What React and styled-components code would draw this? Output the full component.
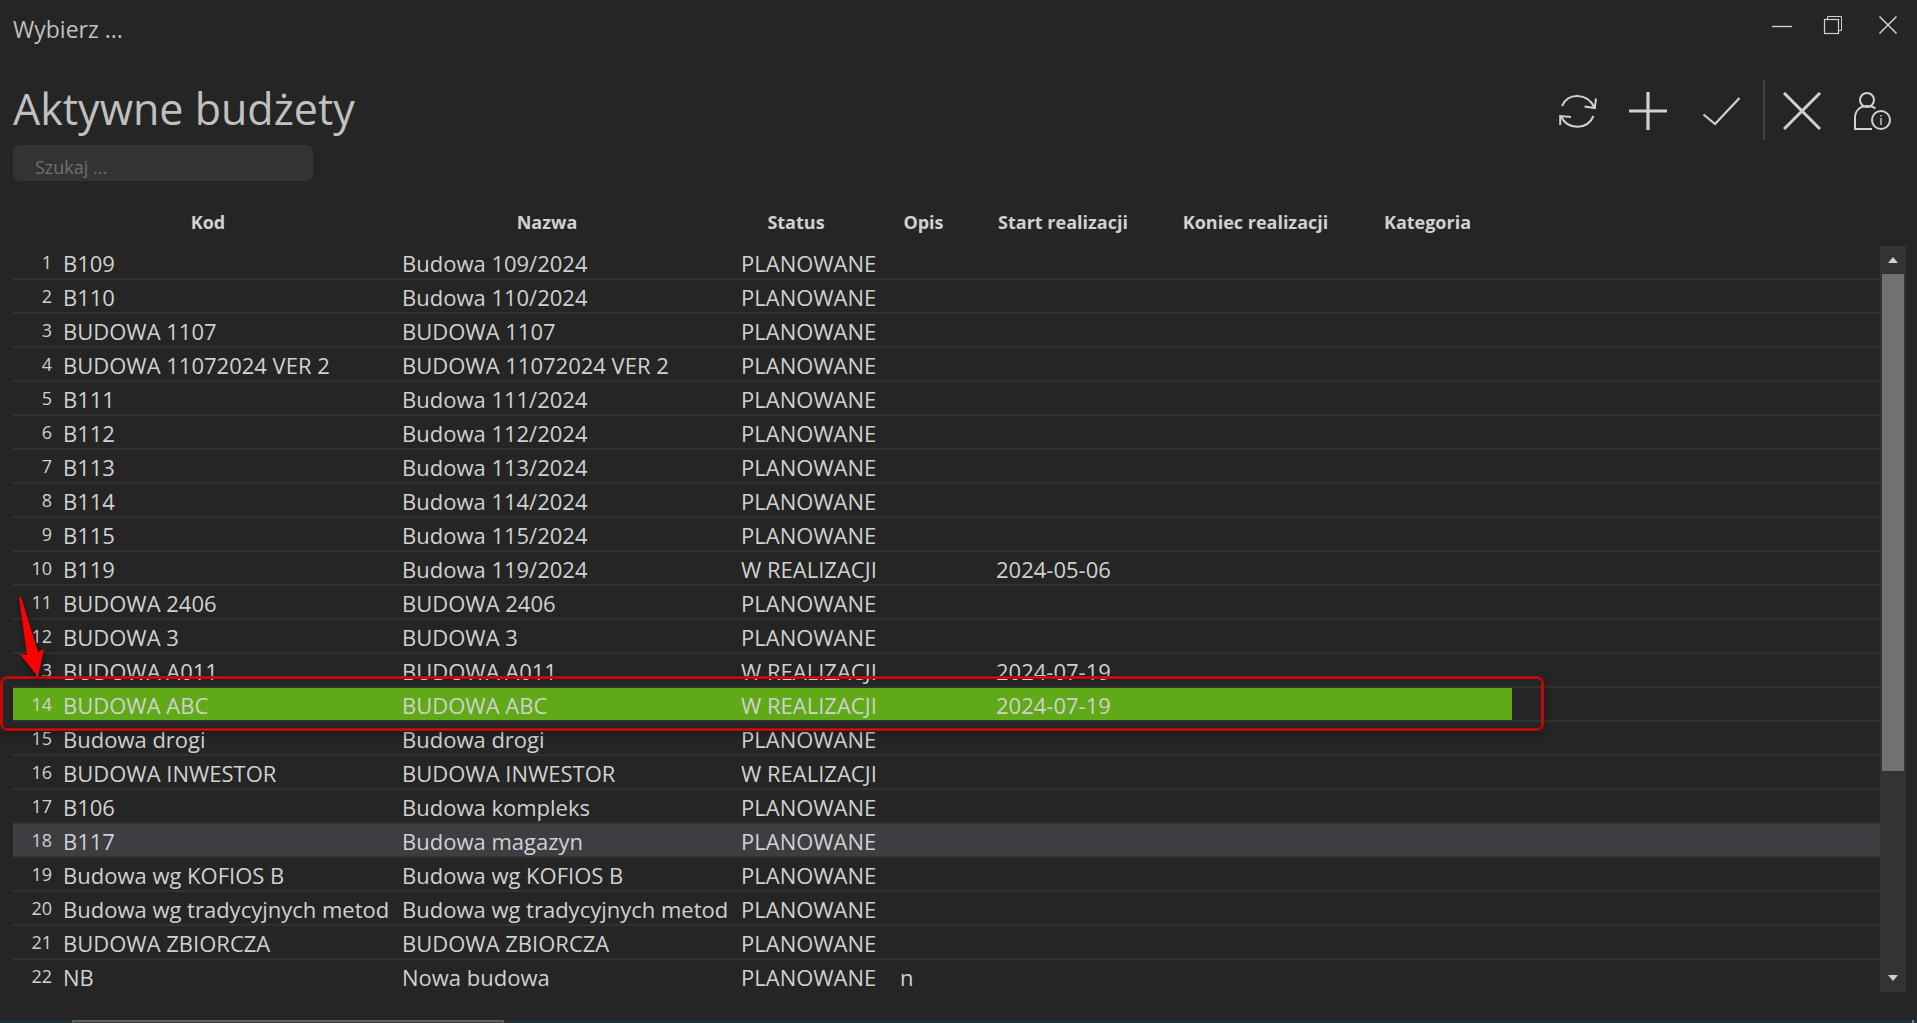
import React, { useState } from "react"
import styled, { createGlobalStyle, css } from "styled-components"

const budgets = [
  { code: "B109", name: "Budowa 109/2024", status: "PLANOWANE" },
  { code: "B110", name: "Budowa 110/2024", status: "PLANOWANE" },
  { code: "BUDOWA 1107", name: "BUDOWA 1107", status: "PLANOWANE" },
  { code: "BUDOWA 11072024 VER 2", name: "BUDOWA 11072024 VER 2", status: "PLANOWANE" },
  { code: "B111", name: "Budowa 111/2024", status: "PLANOWANE" },
  { code: "B112", name: "Budowa 112/2024", status: "PLANOWANE" },
  { code: "B113", name: "Budowa 113/2024", status: "PLANOWANE" },
  { code: "B114", name: "Budowa 114/2024", status: "PLANOWANE" },
  { code: "B115", name: "Budowa 115/2024", status: "PLANOWANE" },
  { code: "B119", name: "Budowa 119/2024", status: "W REALIZACJI", start: "2024-05-06" },
  { code: "BUDOWA 2406", name: "BUDOWA 2406", status: "PLANOWANE" },
  { code: "BUDOWA 3", name: "BUDOWA 3", status: "PLANOWANE" },
  { code: "BUDOWA A011", name: "BUDOWA A011", status: "W REALIZACJI", start: "2024-07-19" },
  { code: "BUDOWA ABC", name: "BUDOWA ABC", status: "W REALIZACJI", start: "2024-07-19" },
  { code: "Budowa drogi", name: "Budowa drogi", status: "PLANOWANE" },
  { code: "BUDOWA INWESTOR", name: "BUDOWA INWESTOR", status: "W REALIZACJI" },
  { code: "B106", name: "Budowa kompleks", status: "PLANOWANE" },
  { code: "B117", name: "Budowa magazyn", status: "PLANOWANE", highlighted: true },
  { code: "Budowa wg KOFIOS B", name: "Budowa wg KOFIOS B", status: "PLANOWANE" },
  { code: "Budowa wg tradycyjnych metod", name: "Budowa wg tradycyjnych metod", status: "PLANOWANE" },
  { code: "BUDOWA ZBIORCZA", name: "BUDOWA ZBIORCZA", status: "PLANOWANE" },
  { code: "NB", name: "Nowa budowa", status: "PLANOWANE", description: "n" },
]

const columns = [
  { key: "code", title: "Kod", width: 339 },
  { key: "name", title: "Nazwa", width: 339 },
  { key: "status", title: "Status", width: 159 },
  { key: "description", title: "Opis", width: 96 },
  { key: "start", title: "Start realizacji", width: 183 },
  { key: "end", title: "Koniec realizacji", width: 202 },
  { key: "category", title: "Kategoria", width: 142 },
]

const App = () => {
  const [search, setSearch] = useState("")
  const [selected, setSelected] = useState("BUDOWA ABC")

  return (
    <>
      <GlobalStyle />
      <Window>
        <TitleBar>
          <WindowTitle>Wybierz ...</WindowTitle>
          <WindowControls>
            <IconButton aria-label="Minimalizuj">
              <svg width="20" height="20" viewBox="0 0 20 20">
                <path d="M0 11.5H20" strokeWidth="1.4" />
              </svg>
            </IconButton>
            <IconButton aria-label="Przywróć">
              <svg width="24" height="20" viewBox="0 0 24 20">
                <path d="M4.500 4V1.500H18.500V15.500H16" strokeWidth="1" />
                <rect x="1.500" y="4.500" width="14" height="14" strokeWidth="1.2" />
              </svg>
            </IconButton>
            <IconButton aria-label="Zamknij okno">
              <svg width="20" height="20" viewBox="0 0 20 20">
                <path d="M1.500 1.500L18.500 18.500M18.500 1.500L1.500 18.500" strokeWidth="1.500" />
              </svg>
            </IconButton>
          </WindowControls>
        </TitleBar>

        <Header>
          <Heading>Aktywne budżety</Heading>
          <Commands>
            <IconButton aria-label="Odśwież">
              <svg width="38" height="38" viewBox="0 0 38 38">
                <path
                  d="M3 14C9 .5 28 .5 35.500 15.500M25.500 14.500L35.800 16L37 6.500M34.500 24C28.500 38 9 38.500 2 24.500M1.200 33V24L12 25"
                  strokeWidth="2"
                />
              </svg>
            </IconButton>
            <IconButton aria-label="Dodaj">
              <svg width="38" height="38" viewBox="0 0 38 38">
                <path d="M19 0V38M0 19H38" strokeWidth="3.200" />
              </svg>
            </IconButton>
            <IconButton aria-label="Zatwierdź">
              <svg width="42" height="38" viewBox="0 0 42 38">
                <path d="M4.500 22.500L16 32L40.500 6" strokeWidth="2.200" />
              </svg>
            </IconButton>
          </Commands>
          <Divider />
          <Commands>
            <IconButton aria-label="Anuluj">
              <svg width="38" height="38" viewBox="0 0 38 38">
                <path d="M1 1L37 37M37 1L1 37" strokeWidth="3" />
              </svg>
            </IconButton>
            <IconButton aria-label="Informacje o użytkowniku">
              <svg width="38" height="38" viewBox="0 0 38 38">
                <circle cx="14" cy="8" r="7" strokeWidth="2" />
                <path d="M22.500 16.500C20 14.500 17 14 14 14C6.500 14 2 19 2 26V37H19" strokeWidth="2" />
                <circle cx="28" cy="28" r="9" strokeWidth="2" />
                <path d="M28 26V33M28 23V24.500" strokeWidth="1.400" />
              </svg>
            </IconButton>
          </Commands>
        </Header>

        <SearchInput
          aria-label="Szukaj"
          placeholder="Szukaj ..."
          value={search}
          onChange={(event) => setSearch(event.target.value)}
        />

        <ListArea>
          <Viewport>
            <Table>
              <colgroup>
                <Col width={39} />
                {columns.map((column) => (
                  <Col key={column.key} width={column.width} />
                ))}
                <col />
              </colgroup>
              <thead>
                <tr>
                  <HeaderCell />
                  {columns.map((column) => (
                    <HeaderCell key={column.key}>{column.title}</HeaderCell>
                  ))}
                  <HeaderCell />
                </tr>
              </thead>
              <tbody>
                {budgets.map((budget, index) => (
                  <Row
                    key={budget.code}
                    $selected={budget.code === selected}
                    $highlighted={budget.highlighted}
                    onClick={() => setSelected(budget.code)}
                  >
                    <NumberCell>{index + 1}</NumberCell>
                    {columns.map((column) => (
                      <Cell key={column.key}>
                        <CellText>{budget[column.key]}</CellText>
                      </Cell>
                    ))}
                    <FillerCell />
                  </Row>
                ))}
              </tbody>
            </Table>
          </Viewport>

          <ScrollBar>
            <ScrollButton aria-label="Przewiń w górę">
              <svg width="10" height="6" viewBox="0 0 10 6">
                <path d="M0 6L5 0L10 6Z" />
              </svg>
            </ScrollButton>
            <ScrollTrack>
              <ScrollThumb />
            </ScrollTrack>
            <ScrollButton aria-label="Przewiń w dół">
              <svg width="10" height="6" viewBox="0 0 10 6">
                <path d="M0 0L5 6L10 0Z" />
              </svg>
            </ScrollButton>
          </ScrollBar>

          <RowMarker />
          <MarkerArrow width="32" height="84" viewBox="0 0 32 84">
            <path d="M5 1L7 1L24 56L30 53L24 81L6 58L13 59Z" />
          </MarkerArrow>
        </ListArea>

        <Taskbar>
          <TaskbarPanel />
          <TaskbarHandle />
        </Taskbar>
      </Window>
    </>
  )
}

export default App

const GlobalStyle = createGlobalStyle`
  * {
    box-sizing: border-box;
  }

  body {
    margin: 0;
    background: #252525;
    color: #d1d1d1;
    font-family: "Open Sans", "Noto Sans", sans-serif;
  }
`

const Window = styled.main`
  height: 100vh;
  display: flex;
  flex-direction: column;
  overflow: hidden;
`

const TitleBar = styled.div`
  height: 80px;
  padding: 15px 19px 0 13px;
  display: flex;
  justify-content: space-between;
  align-items: flex-start;
`

const WindowTitle = styled.span`
  color: #c0c0c0;
  font-size: 23px;
  line-height: 28px;
`

const WindowControls = styled.div`
  display: flex;
  gap: 31px;
`

const IconButton = styled.button`
  display: flex;
  padding: 0;
  border: none;
  background: none;
  color: #d1d1d1;
  cursor: pointer;

  svg {
    fill: none;
    stroke: currentColor;
  }
`

const Header = styled.header`
  height: 60px;
  padding: 0 26px 0 13px;
  display: flex;
  align-items: center;
`

const Heading = styled.h1`
  margin: 0 auto 2px 0;
  color: #c0c0c0;
  font-size: 43px;
  font-weight: 400;
  line-height: 60px;
`

const Commands = styled.div`
  padding-top: 2px;
  display: flex;
  gap: 32px;
`

const Divider = styled.div`
  width: 2px;
  height: 60px;
  margin: 0 18px 0 22px;
  background: #3f3f46;
`

const SearchInput = styled.input`
  width: 300px;
  height: 36px;
  margin: 5px 13px 21px;
  padding: 8px 22px 0;
  border: none;
  border-radius: 6px;
  background: #333333;
  color: #d1d1d1;
  font-family: inherit;
  font-size: 18px;
  outline: none;
  flex-shrink: 0;

  &::placeholder {
    color: #707070;
    opacity: 1;
  }
`

const ListArea = styled.section`
  position: relative;
  flex: 1;
  min-height: 0;
  margin: 0 11px 28px 13px;
  display: flex;
`

const Viewport = styled.div`
  flex: 1;
  min-width: 0;
  overflow: hidden;
`

const Table = styled.table`
  width: 100%;
  table-layout: fixed;
  border-collapse: separate;
  border-spacing: 0;
`

const Col = styled.col`
  width: ${(props) => props.width}px;
`

/* Headings sit a little to the left of their columns */
const HeaderCell = styled.th`
  height: 44px;
  padding: 0 27px 4px 0;
  font-size: 18px;
  font-weight: 700;
  line-height: 24px;
  text-align: center;
  white-space: nowrap;
`

const Cell = styled.td`
  height: 34px;
  padding: 0 0 0 11px;
  border-bottom: 2px solid #313131;
  font-size: 22px;
  line-height: 34px;
`

const CellText = styled.div`
  height: 32px;
  overflow: hidden;
  white-space: nowrap;
`

const NumberCell = styled(Cell)`
  padding: 1px 0 0;
  font-size: 18px;
  line-height: 31px;
  text-align: right;
`

const FillerCell = styled(Cell)`
  padding: 0;
`

const Row = styled.tr`
  ${(props) =>
    props.$highlighted &&
    css`
      background: #3e3d42;
    `}

  ${(props) =>
    props.$selected &&
    css`
      ${Cell}:not(${FillerCell}) {
        background: #60a917;
        background-clip: padding-box;
      }
    `}
`

const ScrollBar = styled.div`
  width: 26px;
  margin-top: 44px;
  display: flex;
  flex-direction: column;
  background: #333333;
`

const ScrollButton = styled.button`
  height: 28px;
  padding: 0;
  border: none;
  background: none;
  display: flex;
  justify-content: center;
  align-items: center;

  svg {
    fill: #d1d1d1;
  }
`

const ScrollTrack = styled.div`
  flex: 1;
  padding: 0 2px;
`

const ScrollThumb = styled.div`
  height: 72%;
  background: #727272;
`

const RowMarker = styled.div`
  position: absolute;
  top: 475px;
  left: -12px;
  width: 1542px;
  height: 53px;
  border: 1px solid #f20000;
  border-radius: 6px;
  box-shadow:
    0 0 0 1px #a80e0e,
    inset 0 0 0 1px #a80e0e,
    0 2px 8px rgb(0 0 0 / 0.4);
  pointer-events: none;
`

const MarkerArrow = styled.svg`
  position: absolute;
  top: 394px;
  left: 1px;
  fill: #ff0000;
  filter: drop-shadow(1px 3px 3px rgb(0 0 0 / 0.5));
  pointer-events: none;
`

const Taskbar = styled.footer`
  height: 3px;
  padding: 0 3px 0 72px;
  display: flex;
  justify-content: space-between;
  background: #203039;
`

const TaskbarPanel = styled.div`
  width: 432px;
  border: 2px solid #606060;
  border-bottom: none;
  background: #3a3a3a;
`

const TaskbarHandle = styled.div`
  width: 2px;
  background: #7d868a;
`
